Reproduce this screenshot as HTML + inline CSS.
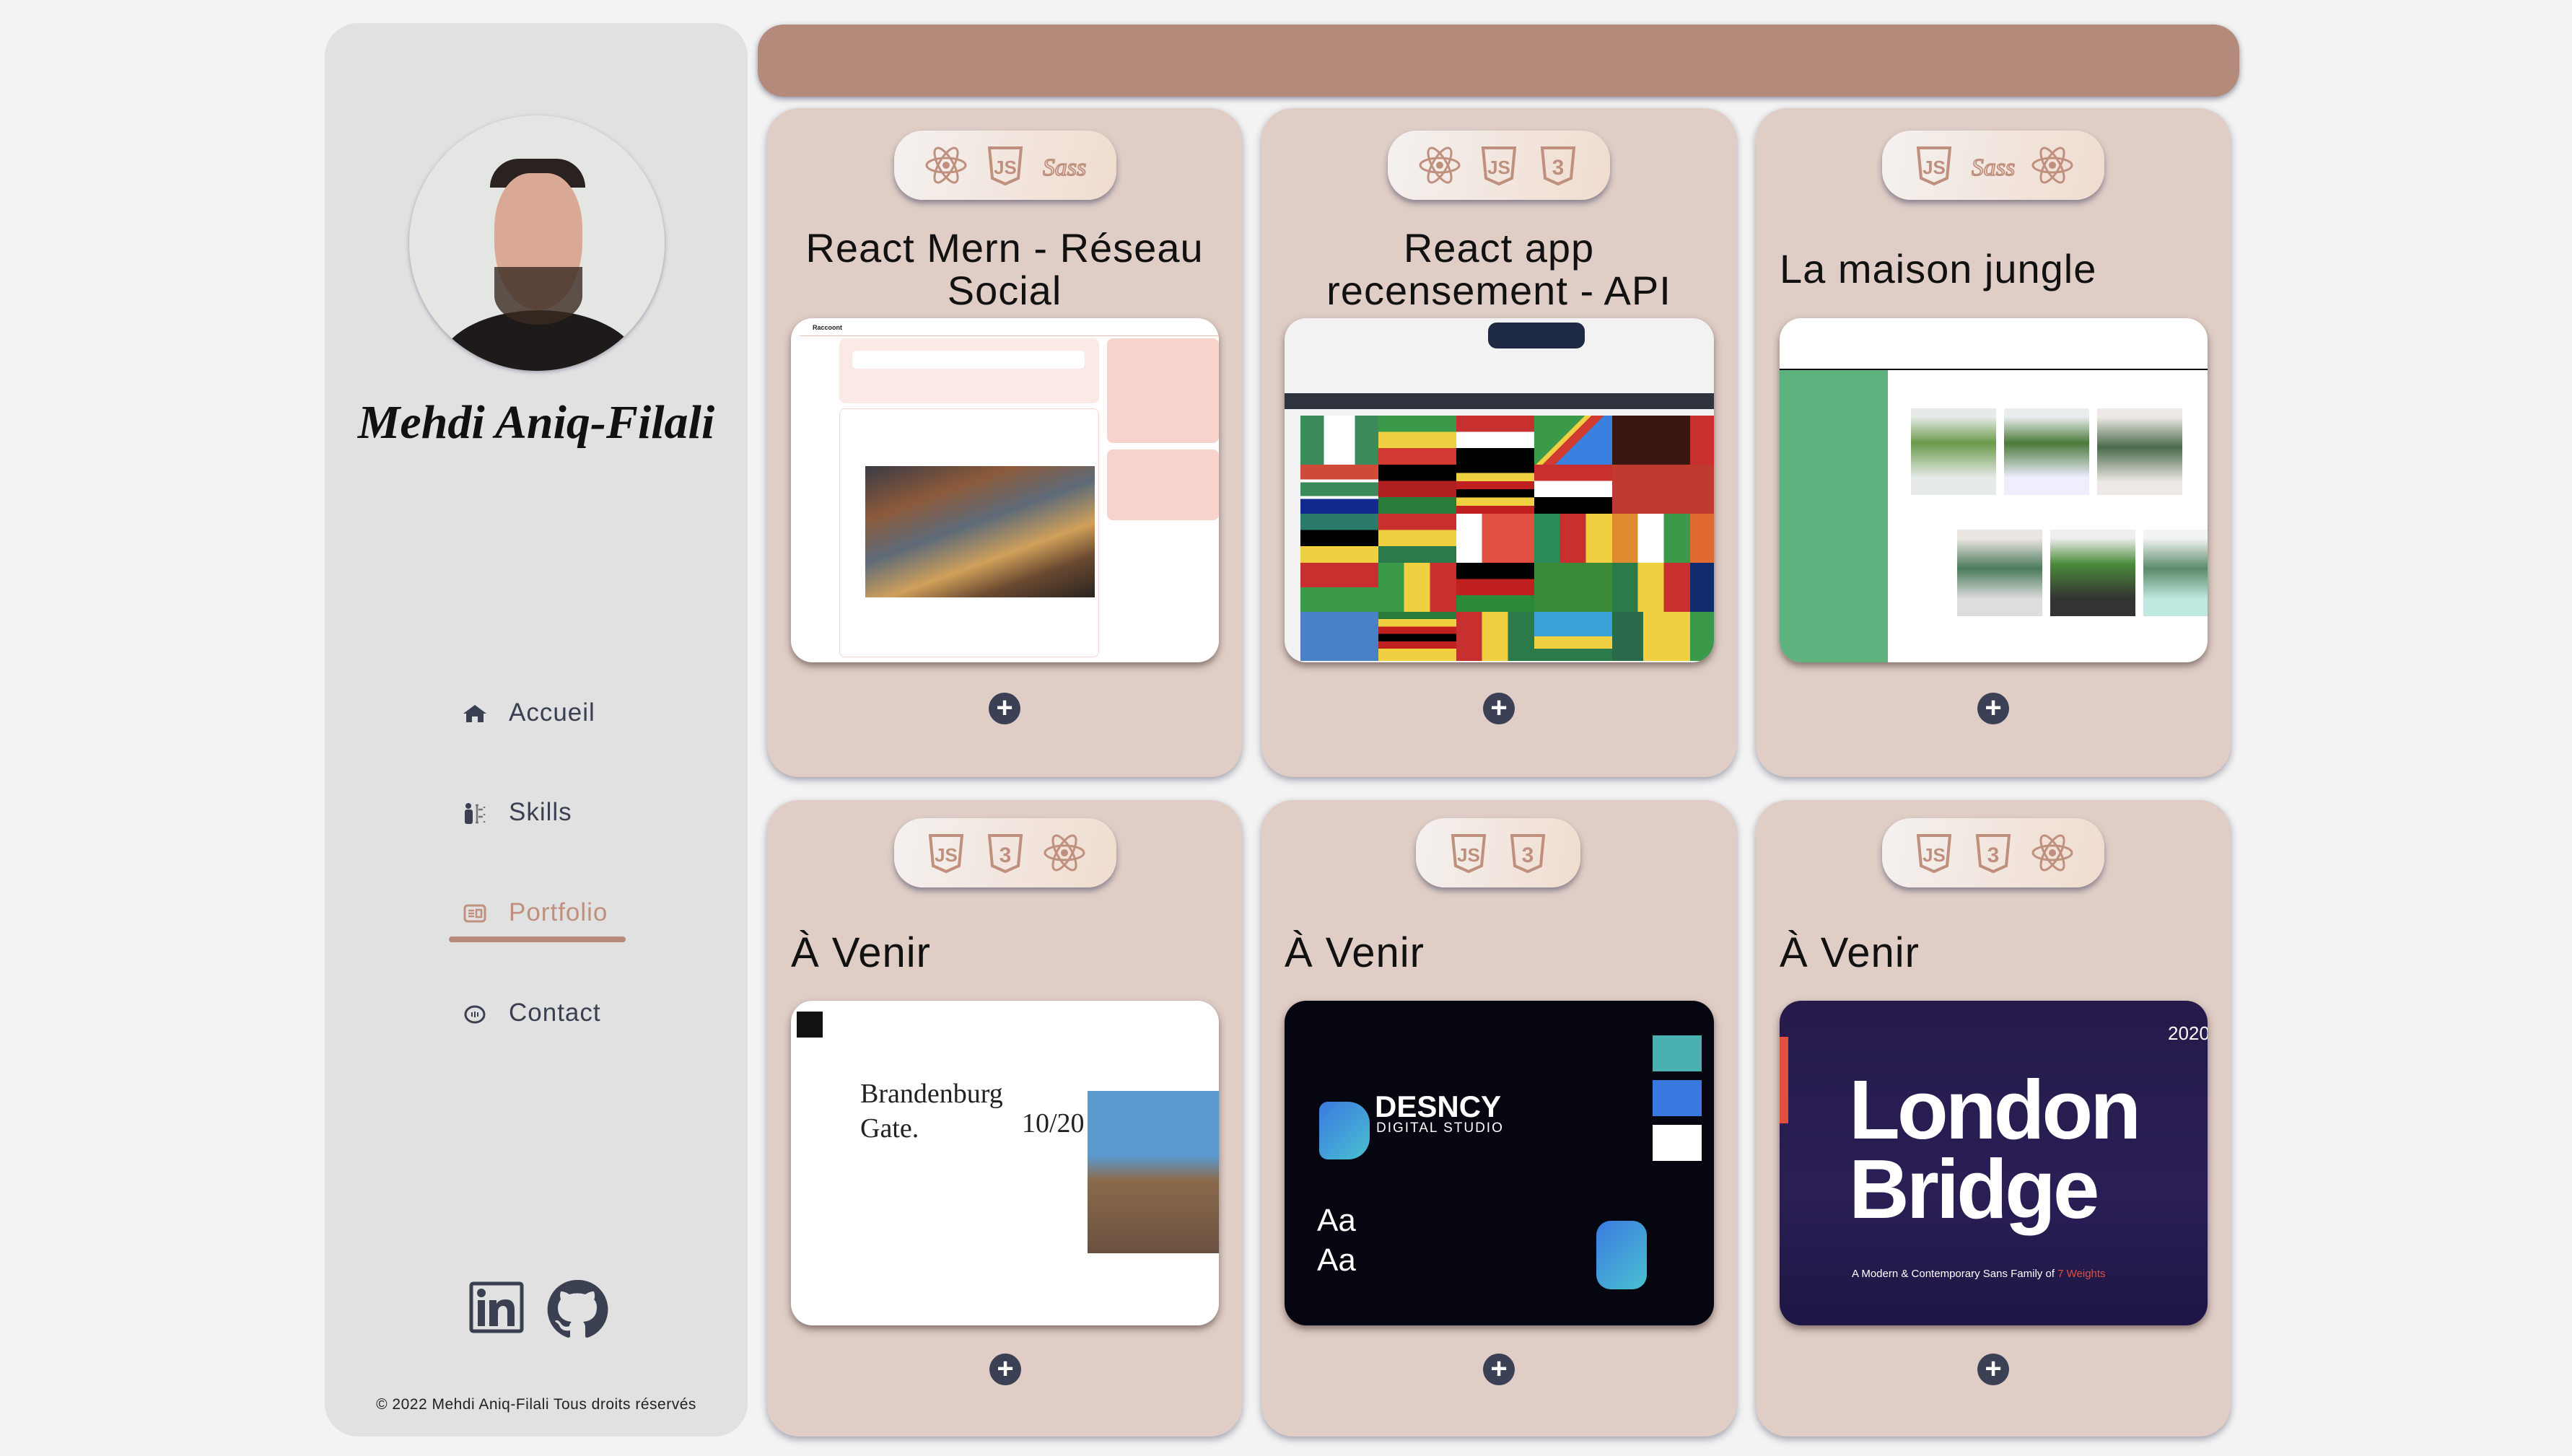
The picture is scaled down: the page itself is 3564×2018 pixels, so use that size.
<!DOCTYPE html>
<html><head><meta charset="utf-8">
<style>
*{margin:0;padding:0;box-sizing:border-box}
body{width:3564px;height:2018px;background:#f3f3f3;position:relative;overflow:hidden;font-family:"Liberation Sans",sans-serif}
.abs{position:absolute}
.side{left:450px;top:32px;width:586px;height:1959px;background:#e0e1e0;border-radius:46px}
.bar{left:1050px;top:34px;width:2053px;height:100px;background:#b48a7b;border-radius:36px;box-shadow:0 3px 8px rgba(60,60,90,.55)}
.card{background:#dfcdc6;border-radius:44px;box-shadow:0 4px 10px rgba(60,60,90,.45)}
.pill{height:96px;border-radius:40px;background:linear-gradient(100deg,#f4f1ef,#f0dccf);box-shadow:0 5px 8px rgba(60,60,90,.5);display:flex;align-items:center;justify-content:center;gap:22px}
.pill svg{width:60px;height:60px}
.t1{font-size:56px;line-height:59px;color:#111;text-align:center;letter-spacing:1px}
.t2{font-size:58px;color:#111;letter-spacing:1px}
.img{border-radius:30px;overflow:hidden;box-shadow:0 5px 10px rgba(60,40,40,.55);background:#fff}
.plus{width:44px;height:44px;border-radius:50%;background:#3b4054;color:#fff;font-size:40px;line-height:42px;text-align:center;font-weight:bold}
.nav{font-size:35px;color:#3a3f52;letter-spacing:1px}
</style></head><body>
<svg width="0" height="0" style="position:absolute">
<defs>
<symbol id="react" viewBox="0 0 60 60"><g fill="none" stroke="#c0907f" stroke-width="3"><ellipse cx="30" cy="30" rx="27" ry="10"/><ellipse cx="30" cy="30" rx="27" ry="10" transform="rotate(60 30 30)"/><ellipse cx="30" cy="30" rx="27" ry="10" transform="rotate(120 30 30)"/></g><circle cx="30" cy="30" r="5" fill="#c0907f"/></symbol>
<symbol id="js" viewBox="0 0 60 60"><path d="M8 6h44l-4 42-18 8-18-8z" fill="none" stroke="#c0907f" stroke-width="4"/><text x="30" y="42" font-size="26" font-weight="bold" text-anchor="middle" fill="#c0907f" font-family="Liberation Sans">JS</text></symbol>
<symbol id="css" viewBox="0 0 60 60"><path d="M8 6h44l-4 42-18 8-18-8z" fill="none" stroke="#c0907f" stroke-width="4"/><text x="30" y="43" font-size="30" font-weight="bold" text-anchor="middle" fill="#c0907f" font-family="Liberation Sans">3</text></symbol>
<symbol id="sass" viewBox="0 0 60 60"><text x="30" y="44" font-size="34" font-style="italic" text-anchor="middle" fill="none" stroke="#c0907f" stroke-width="1.8" font-family="Liberation Serif">Sass</text></symbol>
</defs></svg>

<div class="abs side"></div>
<div class="abs" style="left:567px;top:160px;width:354px;height:354px;border-radius:50%;overflow:hidden;background:#e3e6e2;box-shadow:0 2px 6px rgba(60,60,100,.4)">
 <div class="abs" style="left:40px;top:270px;width:280px;height:160px;border-radius:50% 50% 0 0;background:#1e1a1a"></div>
 <div class="abs" style="left:112px;top:60px;width:132px;height:40px;border-radius:60px 60px 0 0;background:#2a2220"></div>
 <div class="abs" style="left:118px;top:80px;width:122px;height:190px;border-radius:40% 40% 50% 50%;background:#d9a995"></div>
 <div class="abs" style="left:118px;top:210px;width:122px;height:80px;border-radius:0 0 50% 50%;background:#3a2a22;opacity:.8"></div>
</div>
<div class="abs" style="left:450px;top:548px;width:586px;text-align:center;font-family:'Liberation Serif',serif;font-style:italic;font-weight:bold;font-size:66px;color:#111">Mehdi Aniq-Filali</div>

<svg class="abs" style="left:640px;top:975px" width="36" height="28" viewBox="0 0 36 28"><path d="M2 14L18 2l16 12h-4v12h-8v-8h-8v8H6V14z" fill="#3a3f52"/></svg>
<div class="abs nav" style="left:705px;top:968px">Accueil</div>
<svg class="abs" style="left:642px;top:1112px" width="32" height="32" viewBox="0 0 32 32"><circle cx="7" cy="5" r="4" fill="#3a3f52"/><rect x="2" y="10" width="11" height="20" rx="3" fill="#3a3f52"/><path d="M17 4h4M19 4v24M17 28h4M21 10h6M21 20h6M29 6v2M29 16v2M29 26v2" stroke="#777" stroke-width="2.5"/></svg>
<div class="abs nav" style="left:705px;top:1106px">Skills</div>
<svg class="abs" style="left:642px;top:1253px" width="32" height="26" viewBox="0 0 32 26"><rect x="2" y="2" width="28" height="22" rx="4" fill="none" stroke="#c0907f" stroke-width="3"/><path d="M7 9h8M7 13h8M7 17h8" stroke="#c0907f" stroke-width="2.5"/><rect x="18" y="8" width="7" height="10" fill="none" stroke="#c0907f" stroke-width="2.5"/></svg>
<div class="abs nav" style="left:705px;top:1245px;color:#c0907f">Portfolio</div>
<div class="abs" style="left:622px;top:1298px;width:245px;height:8px;border-radius:4px;background:#b88a7c"></div>
<svg class="abs" style="left:643px;top:1393px" width="30" height="26" viewBox="0 0 30 26"><ellipse cx="15" cy="13" rx="13" ry="11" fill="none" stroke="#3a3f52" stroke-width="3"/><path d="M11 10v6M15 9v8M19 10v6" stroke="#3a3f52" stroke-width="2"/></svg>
<div class="abs nav" style="left:705px;top:1384px">Contact</div>

<svg class="abs" style="left:650px;top:1776px" width="76" height="72" viewBox="0 0 76 72"><rect x="3" y="3" width="70" height="66" rx="3" fill="none" stroke="#3a3f52" stroke-width="5"/><rect x="12" y="26" width="10" height="36" fill="#3a3f52"/><circle cx="17" cy="16" r="6" fill="#3a3f52"/><path d="M28 26h10v5c3-5 8-6 13-6 9 0 12 6 12 14v23H53V42c0-5-2-8-6-8s-7 3-7 8v20H28z" fill="#3a3f52"/></svg>
<svg class="abs" style="left:757px;top:1772px" width="86" height="82" viewBox="0 0 86 82"><path d="M43 2a41 41 0 0 0-13 80c2 0 3-1 3-2v-8c-11 2-14-5-14-5-2-5-5-6-5-6-4-3 0-3 0-3 4 0 6 4 6 4 4 6 9 5 12 4 0-3 2-5 3-6-9-1-19-5-19-20 0-4 2-8 4-11 0-1-2-5 0-11 0 0 4-1 12 4a40 40 0 0 1 22 0c8-5 12-4 12-4 2 6 1 10 0 11 3 3 4 7 4 11 0 15-10 19-19 20 2 2 3 5 3 8v12c0 1 1 2 3 2A41 41 0 0 0 43 2z" fill="#3a3f52"/></svg>
<div class="abs" style="left:450px;top:1935px;width:586px;text-align:center;font-size:21px;color:#222;letter-spacing:.5px">© 2022 Mehdi Aniq-Filali Tous droits réservés</div>

<div class="abs bar"></div>

<div class="abs card" style="left:1063px;top:150px;width:658px;height:927px"></div>
<div class="abs card" style="left:1748px;top:150px;width:658px;height:927px"></div>
<div class="abs card" style="left:2433px;top:150px;width:658px;height:927px"></div>
<div class="abs card" style="left:1063px;top:1109px;width:658px;height:882px"></div>
<div class="abs card" style="left:1748px;top:1109px;width:658px;height:882px"></div>
<div class="abs card" style="left:2433px;top:1109px;width:658px;height:882px"></div>

<div class="abs pill" style="left:1239px;top:181px;width:308px"><svg><use href="#react"/></svg><svg><use href="#js"/></svg><svg><use href="#sass"/></svg></div>
<div class="abs pill" style="left:1923px;top:181px;width:308px"><svg><use href="#react"/></svg><svg><use href="#js"/></svg><svg><use href="#css"/></svg></div>
<div class="abs pill" style="left:2608px;top:181px;width:308px"><svg><use href="#js"/></svg><svg><use href="#sass"/></svg><svg><use href="#react"/></svg></div>
<div class="abs pill" style="left:1239px;top:1134px;width:308px"><svg><use href="#js"/></svg><svg><use href="#css"/></svg><svg><use href="#react"/></svg></div>
<div class="abs pill" style="left:1962px;top:1134px;width:228px"><svg><use href="#js"/></svg><svg><use href="#css"/></svg></div>
<div class="abs pill" style="left:2608px;top:1134px;width:308px"><svg><use href="#js"/></svg><svg><use href="#css"/></svg><svg><use href="#react"/></svg></div>

<div class="abs t1" style="left:1063px;top:314px;width:658px">React Mern - Réseau<br>Social</div>
<div class="abs t1" style="left:1748px;top:314px;width:658px">React app<br>recensement - API</div>
<div class="abs t1" style="left:2466px;top:343px;width:620px;text-align:left">La maison jungle</div>
<div class="abs t2" style="left:1096px;top:1287px">À Venir</div>
<div class="abs t2" style="left:1780px;top:1287px">À Venir</div>
<div class="abs t2" style="left:2466px;top:1287px">À Venir</div>

<div class="abs img" style="left:1096px;top:441px;width:593px;height:477px">
 <div class="abs" style="left:30px;top:8px;font-size:9px;font-weight:bold;color:#222">Raccoont</div>
 <div class="abs" style="left:12px;top:24px;width:581px;height:1px;background:#f0b9b0"></div>
 <div class="abs" style="left:67px;top:28px;width:360px;height:90px;background:#fbe9e6;border-radius:8px"></div>
 <div class="abs" style="left:85px;top:45px;width:322px;height:25px;background:#fff;border-radius:6px"></div>
 <div class="abs" style="left:67px;top:125px;width:360px;height:345px;border:1px solid #f6d6d0;border-radius:8px"></div>
 <div class="abs" style="left:103px;top:205px;width:318px;height:182px;background:linear-gradient(160deg,#3a3a44 0%,#8c5a3a 25%,#5e6a78 45%,#d0a05a 65%,#6b4a30 80%,#2a2420 100%)"></div>
 <div class="abs" style="left:438px;top:28px;width:155px;height:145px;background:#f8d3cb;border-radius:8px"></div>
 <div class="abs" style="left:438px;top:182px;width:155px;height:98px;background:#f8d3cb;border-radius:8px"></div>
</div>
<div class="abs img" style="left:1780px;top:441px;width:595px;height:477px;background:#f2f2f3">
 <div class="abs" style="left:282px;top:6px;width:134px;height:36px;border-radius:12px;background:#1e2a44"></div>
 <div class="abs" style="left:0;top:104px;width:595px;height:22px;background:#30343f"></div>
 <div class="abs" style="left:22px;top:135px;width:580px;height:342px;display:grid;grid-template-columns:repeat(6,108px);grid-template-rows:repeat(5,68px)">
  <div style="background:linear-gradient(90deg,#3a8a5a 30%,#fff 30% 70%,#3a8a5a 70%)"></div>
  <div style="background:linear-gradient(#3a9a4a 33%,#f0d040 33% 66%,#d03a30 66%)"></div>
  <div style="background:linear-gradient(#c83030 33%,#fff 33% 66%,#000 66%)"></div>
  <div style="background:linear-gradient(135deg,#3a9a4a 40%,#f0d040 40% 45%,#d03a30 45% 55%,#3a80e0 55%)"></div>
  <div style="background:#3a1810"></div>
  <div style="background:#c83030"></div>
  <div style="background:linear-gradient(#d04a3a 30%,#fff 30% 36%,#3a8a5a 36% 64%,#fff 64% 70%,#102a90 70%)"></div>
  <div style="background:linear-gradient(#000 33%,#b02020 33% 66%,#2a7a3a 66%)"></div>
  <div style="background:linear-gradient(#000 17%,#f0d040 17% 34%,#c02020 34% 50%,#000 50% 67%,#f0d040 67% 84%,#c02020 84%)"></div>
  <div style="background:linear-gradient(#c83030 33%,#fff 33% 66%,#000 66%)"></div>
  <div style="background:#c03a30"></div>
  <div style="background:#c03a30"></div>
  <div style="background:linear-gradient(#2a7a6a 33%,#000 33% 66%,#f0d040 66%)"></div>
  <div style="background:linear-gradient(#c83030 33%,#f0d040 33% 66%,#2a7a4a 66%)"></div>
  <div style="background:linear-gradient(90deg,#fff 33%,#e05040 33%)"></div>
  <div style="background:linear-gradient(90deg,#2a8a5a 33%,#c83030 33% 66%,#f0d040 66%)"></div>
  <div style="background:linear-gradient(90deg,#e08a30 33%,#fff 33% 66%,#3a9a4a 66%)"></div>
  <div style="background:#e06a30"></div>
  <div style="background:linear-gradient(#c83030 50%,#3a9a4a 50%)"></div>
  <div style="background:linear-gradient(90deg,#3a9a4a 33%,#f0d040 33% 66%,#c83030 66%)"></div>
  <div style="background:linear-gradient(#000 33%,#c02020 33% 66%,#2a8a3a 66%)"></div>
  <div style="background:#3a8a3a"></div>
  <div style="background:linear-gradient(90deg,#2a7a4a 33%,#f0d040 33% 66%,#c83030 66%)"></div>
  <div style="background:#102a70"></div>
  <div style="background:#4a80c8"></div>
  <div style="background:linear-gradient(#2a7a3a 15%,#f0d040 15% 30%,#c02020 30% 45%,#000 45% 60%,#c02020 60% 75%,#f0d040 75%)"></div>
  <div style="background:linear-gradient(90deg,#c83030 33%,#f0d040 33% 66%,#2a7a4a 66%)"></div>
  <div style="background:linear-gradient(#3aa0d8 50%,#f0d040 50% 75%,#2a7a4a 75%)"></div>
  <div style="background:linear-gradient(90deg,#2a6a4a 40%,#f0d040 40%)"></div>
  <div style="background:#3a9a4a"></div>
 </div>
</div>
<div class="abs img" style="left:2466px;top:441px;width:593px;height:477px">
 <div class="abs" style="left:0;top:70px;width:593px;height:2px;background:#000"></div>
 <div class="abs" style="left:0;top:72px;width:150px;height:405px;background:#5db27d"></div>
 <div class="abs" style="left:182px;top:125px;width:118px;height:120px;background:linear-gradient(#e6ebe8 10%,#6a9a4a 40%,#e6ebe8 80%)"></div>
 <div class="abs" style="left:311px;top:125px;width:118px;height:120px;background:linear-gradient(#e9edee 10%,#4a7a3a 40%,#eef 80%)"></div>
 <div class="abs" style="left:440px;top:125px;width:118px;height:120px;background:linear-gradient(#eee9e6 10%,#4a6a4a 45%,#eee9e6 85%)"></div>
 <div class="abs" style="left:246px;top:293px;width:118px;height:120px;background:linear-gradient(#ece6e2 10%,#4a7a5a 45%,#ddd 80%)"></div>
 <div class="abs" style="left:375px;top:293px;width:118px;height:120px;background:linear-gradient(#eeeeec 10%,#4a8a3a 40%,#333 80%)"></div>
 <div class="abs" style="left:504px;top:293px;width:89px;height:120px;background:linear-gradient(#f2f4f3 10%,#5a8a6a 45%,#bfe8e0 80%)"></div>
</div>

<div class="abs img" style="left:1096px;top:1387px;width:593px;height:450px">
 <div class="abs" style="left:8px;top:15px;width:36px;height:36px;background:#111"></div>
 <div class="abs" style="left:96px;top:105px;font-family:'Liberation Serif',serif;font-size:38px;line-height:48px;color:#222">Brandenburg<br>Gate.</div>
 <div class="abs" style="left:411px;top:125px;width:182px;height:225px;background:linear-gradient(#5a9ad0 40%,#8a6a4a 55%,#6a5040 100%)"></div>
 <div class="abs" style="left:320px;top:148px;font-family:'Liberation Serif',serif;font-size:38px;color:#222">10/20</div>
</div>
<div class="abs img" style="left:1780px;top:1387px;width:595px;height:450px;background:#05060f">
 <div class="abs" style="left:48px;top:140px;width:70px;height:80px;border-radius:12px 30px 30px 12px;background:linear-gradient(135deg,#3a7ae0,#4ac0d0)"></div>
 <div class="abs" style="left:125px;top:123px;font-size:42px;font-weight:bold;color:#fff">DESNCY</div>
 <div class="abs" style="left:127px;top:166px;font-size:19px;color:#fff;letter-spacing:2px">DIGITAL STUDIO</div>
 <div class="abs" style="left:510px;top:48px;width:68px;height:50px;background:#4ab0b0"></div>
 <div class="abs" style="left:510px;top:110px;width:68px;height:50px;background:#3a7ae0"></div>
 <div class="abs" style="left:510px;top:172px;width:68px;height:50px;background:#fff"></div>
 <div class="abs" style="left:45px;top:280px;font-size:44px;color:#fff">Aa</div>
 <div class="abs" style="left:45px;top:335px;font-size:44px;color:#fff">Aa</div>
 <div class="abs" style="left:432px;top:305px;width:70px;height:95px;border-radius:20px;background:linear-gradient(135deg,#3a7ae0,#4ac0d0)"></div>
</div>
<div class="abs img" style="left:2466px;top:1387px;width:593px;height:450px;background:linear-gradient(#251a4a,#2a1e55 60%,#1e1645)">
 <div class="abs" style="left:0;top:50px;width:12px;height:120px;background:#e0503a"></div>
 <div class="abs" style="left:538px;top:30px;font-size:26px;color:#fff">2020</div>
 <div class="abs" style="left:96px;top:96px;font-size:116px;line-height:110px;font-weight:bold;color:#fff;letter-spacing:-4px">London<br>Bridge</div>
 <div class="abs" style="left:100px;top:370px;font-size:15px;color:#fff">A Modern &amp; Contemporary Sans Family of <span style="color:#e0503a">7 Weights</span></div>
</div>

<div class="abs plus" style="left:1370px;top:960px">+</div>
<div class="abs plus" style="left:2055px;top:960px">+</div>
<div class="abs plus" style="left:2740px;top:960px">+</div>
<div class="abs plus" style="left:1371px;top:1876px">+</div>
<div class="abs plus" style="left:2055px;top:1876px">+</div>
<div class="abs plus" style="left:2740px;top:1876px">+</div>
</body></html>
